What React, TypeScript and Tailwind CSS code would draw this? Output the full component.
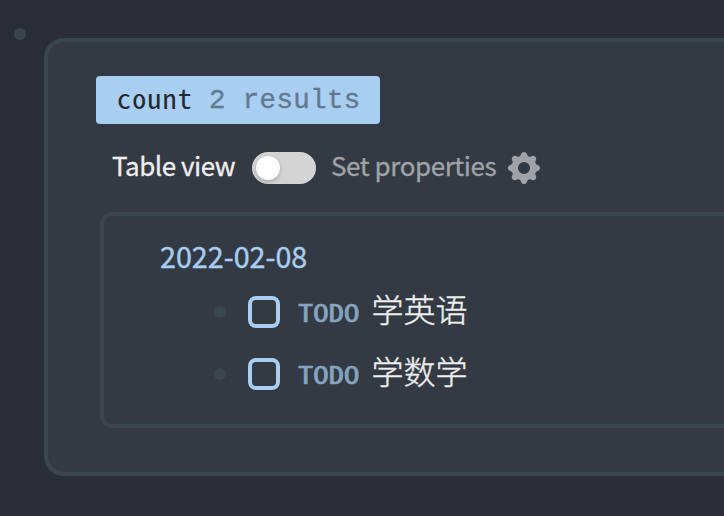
import { HiCog } from "react-icons/hi";

const sans = "font-['Noto_Sans_CJK_SC',sans-serif]";
const mono = "font-['Noto_Sans_Mono_CJK_SC','DejaVu_Sans_Mono',monospace]";

function Task({ title }: { title: string }) {
  return (
    <div className="flex h-[62px] items-center">
      <span className="size-3 rounded-full bg-[#3a464e]" />
      <span className="ml-[22px] size-8 rounded-lg border-4 border-[#a8cef1]" />
      <span className={`${mono} mt-px ml-[18px] w-[74px] text-[24.5px] leading-none text-[#86a3bf] [-webkit-text-stroke:0.6px_#86a3bf]`}>
        <span className="inline-block origin-left scale-x-[1.25]">TODO</span>
      </span>
      <span className="mb-2 -ml-[0.5px] text-[32px] leading-none font-light whitespace-nowrap text-[#efefef] [-webkit-text-stroke:0.4px_#efefef]">{title}</span>
    </div>
  );
}

export default function App() {
  return (
    <div className={`${sans} flex h-[516px] w-[724px] overflow-hidden bg-[#292d36]`}>
      <span className="mt-7 ml-[14px] size-3 shrink-0 rounded-full bg-[#3a464e]" />
      <main className="mt-[38px] ml-[18px] h-[438px] w-[720px] shrink-0 rounded-[20px] border-4 border-[#3a464e] bg-[#333a43] pt-[34px]">
        <div className="ml-12 flex h-12 w-[284px] items-center rounded bg-[#a8cef1] pl-[21px] leading-none whitespace-nowrap">
          <span className={`${mono} mb-[6px] w-[92px] text-[28px] tracking-[1.2px] text-[#24292f]`}>count</span>
          <span className="mt-px font-['Liberation_Mono',monospace] text-[27.5px] tracking-[0.35px] text-[#637990] [-webkit-text-stroke:0.35px_#637990]">2 results</span>
        </div>
        <div className="mt-3 ml-16 flex h-16 items-center text-[26px] leading-none whitespace-nowrap">
          <span className="mb-[7px] w-[140px] tracking-[-0.48px] text-[#efefef] [-webkit-text-stroke:0.3px_#efefef]">Table view</span>
          <span className="flex h-8 w-16 items-center rounded-full bg-[#d4d4d4] pl-1">
            <span className="size-6 rounded-full bg-white shadow-[0_2px_4px_rgba(0,0,0,0.2)]" />
          </span>
          <span className="mb-[7px] ml-[15px] w-[173px] tracking-[-0.42px] text-[#9fa3a7] [-webkit-text-stroke:0.3px_#9fa3a7]">Set properties</span>
          <HiCog className="size-10 text-[#9fa3a7]" />
        </div>
        <section className="mt-3 ml-[52px] h-[216px] w-[680px] rounded-xl border-4 border-[#3a464e] pt-5">
          <div className="ml-14 h-[45px] text-[28.7px] leading-10 text-[#a8cef1] [-webkit-text-stroke:0.4px_#a8cef1]">2022-02-08</div>
          <div className="ml-[110px]">
            <Task title="学英语" />
            <Task title="学数学" />
          </div>
        </section>
      </main>
    </div>
  );
}
